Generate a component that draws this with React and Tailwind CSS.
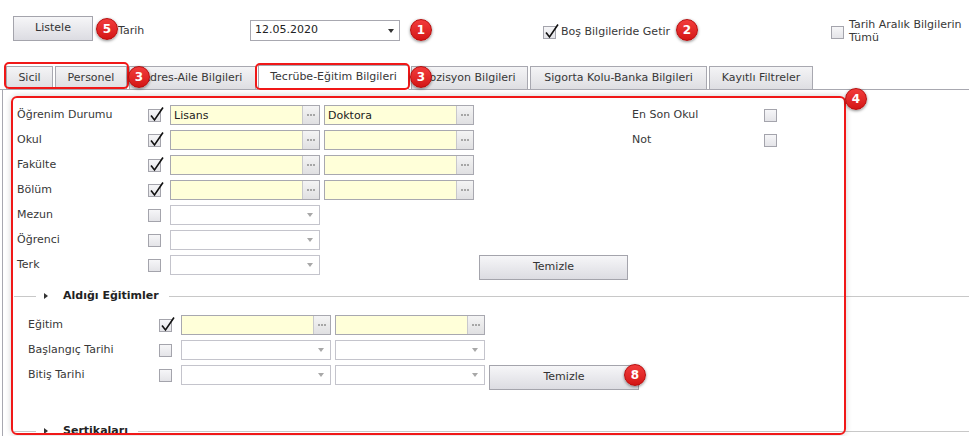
const FONT = "font-['DejaVu_Sans',Verdana,sans-serif]";

function Badge({ n, x, y }) {
  return (
    <div
      className="absolute w-[22px] h-[22px] rounded-full bg-gradient-to-b from-[#f23b3b] to-[#d41414] border border-[#b50d0d] shadow-[0_1px_3px_rgba(0,0,0,0.45)] flex items-center justify-center text-white text-[12px] font-bold leading-none"
      style={{ left: x - 11, top: y - 11 }}
    >
      {n}
    </div>
  );
}

function Check({ checked }) {
  return (
    <div className="relative w-[13px] h-[13px] border border-[#a4a4ac] bg-gradient-to-b from-[#f6f6f8] to-[#e4e4e8]">
      {checked && (
        <svg className="absolute left-[0px] top-[-4px]" width="16" height="17" viewBox="0 0 16 17">
          <path d="M2 9.5 L5.5 14 L14 1.5" fill="none" stroke="#111" strokeWidth="1.6" strokeLinejoin="miter" />
        </svg>
      )}
    </div>
  );
}

function Lookup({ value }) {
  return (
    <div className="flex w-[150px] h-[20px] border border-[#a8a8b0] bg-[#ffffd9]">
      <div className="flex-1 pl-[3px] leading-[19px] text-[#222]">{value}</div>
      <div className="w-[17px] h-full border-l border-[#c8c8cc] bg-gradient-to-b from-[#f4f4f4] to-[#e0e0e2] flex items-center justify-center gap-[1px]">
        <span className="w-[2px] h-[2px] bg-[#a6a6a6]" />
        <span className="w-[2px] h-[2px] bg-[#a6a6a6]" />
        <span className="w-[2px] h-[2px] bg-[#a6a6a6]" />
      </div>
    </div>
  );
}

function Combo() {
  return (
    <div className="flex items-center justify-end w-[150px] h-[20px] border border-[#c4c4cc] bg-white pr-[6px]">
      <span className="w-0 h-0 border-x-[3.5px] border-x-transparent border-t-[4px] border-t-[#a8a8a8]" />
    </div>
  );
}

function Button({ children, className }) {
  return (
    <div className={`h-[25px] border border-[#a4a4ac] bg-gradient-to-b from-[#f6f6f8] to-[#dcdce2] flex items-center justify-center text-[#333] ${className}`}>
      {children}
    </div>
  );
}

function Divider({ title }) {
  return (
    <div className="flex items-center h-[14px]">
      <div className="ml-[11px] w-[22px] h-px bg-[#c8c8c8]" />
      <span className="ml-[8px] w-0 h-0 border-y-[3.5px] border-y-transparent border-l-[4px] border-l-[#333]" />
      <div className="ml-[15px] font-bold text-[#222] whitespace-nowrap">{title}</div>
      <div className="ml-[10px] flex-1 h-px bg-[#c8c8c8]" />
    </div>
  );
}

const rows = [
  { label: 'Öğrenim Durumu', checked: true, kind: 'lookup', a: 'Lisans', b: 'Doktora', right: 'En Son Okul' },
  { label: 'Okul', checked: true, kind: 'lookup', right: 'Not' },
  { label: 'Fakülte', checked: true, kind: 'lookup' },
  { label: 'Bölüm', checked: true, kind: 'lookup' },
  { label: 'Mezun', checked: false, kind: 'combo' },
  { label: 'Öğrenci', checked: false, kind: 'combo' },
  { label: 'Terk', checked: false, kind: 'combo', button: true },
];

const tabs = [
  { name: 'Sicil', w: 'w-[47px]' },
  { name: 'Personel', w: 'w-[72px]' },
  { name: 'Adres-Aile Bilgileri', w: 'w-[127px]' },
  { name: 'Tecrübe-Eğitim Bilgileri', w: 'w-[151px]', active: true },
  { name: 'Pozisyon Bilgileri', w: 'w-[117px]' },
  { name: 'Sigorta Kolu-Banka Bilgileri', w: 'w-[177px]' },
  { name: 'Kayıtlı Filtreler', w: 'w-[104px]' },
];

export default function App() {
  return (
    <div className={`relative w-[969px] h-[436px] overflow-hidden bg-white text-[11px] text-[#383838] ${FONT}`}>
      {/* top bar */}
      <div className="flex items-start h-[65px]">
        <Button className="ml-[13px] mt-[16px] w-[80px]">Listele</Button>
        <div className="ml-[25px] mt-[23px] w-[132px]">Tarih</div>
        <div className="mt-[20px] w-[150px] h-[21px] border border-[#a8a8b0] flex items-center justify-between pl-[4px] pr-[5px] text-[#222]">
          <span>12.05.2020</span>
          <span className="w-0 h-0 border-x-[3.5px] border-x-transparent border-t-[4px] border-t-[#333]" />
        </div>
        <div className="ml-[143px] mt-[24px] w-[288px] flex items-center gap-[5px]">
          <Check checked />
          <span>Boş Bilgileride Getir</span>
        </div>
        <div className="mt-[18px] flex items-start gap-[5px]">
          <div className="mt-[8px]"><Check /></div>
          <div className="leading-[13px]">Tarih Aralık Bilgilerin<br />Tümü</div>
        </div>
      </div>

      {/* tabs */}
      <div className="flex items-end h-[25px] pl-[6px] gap-[2px] border-b border-[#a8a8b0]">
        {tabs.map((t) => (
          <div
            key={t.name}
            className={`${t.w} flex items-center justify-center border border-[#a8a8b0] whitespace-nowrap ${
              t.active ? 'h-[25px] -mb-px border-b-white bg-white' : 'h-[24px] -mb-px bg-gradient-to-b from-[#f4f4f6] to-[#dedee2]'
            }`}
          >
            {t.name}
          </div>
        ))}
      </div>

      {/* panel */}
      <div className="ml-[2px] h-[400px] border-l border-[#a8a8b0] pt-[15px]">
        <div className="flex flex-col gap-[5px]">
          {rows.map((r) => (
            <div key={r.label} className="flex items-center h-[20px] pl-[14px]">
              <div className="w-[131px] pt-px">{r.label}</div>
              <div className="w-[22px]"><Check checked={r.checked} /></div>
              {r.kind === 'lookup' ? (
                <>
                  <Lookup value={r.a} />
                  <div className="ml-[4px]"><Lookup value={r.b} /></div>
                </>
              ) : (
                <Combo />
              )}
              {r.right && (
                <>
                  <div className="ml-[158px] w-[132px] pt-px">{r.right}</div>
                  <Check />
                </>
              )}
              {r.button && (
                <div className="self-start ml-[159px]">
                  <Button className="w-[149px]">Temizle</Button>
                </div>
              )}
            </div>
          ))}
        </div>

        <div className="mt-[14px]">
          <Divider title="Aldığı Eğitimler" />
        </div>

        <div className="mt-[12px] flex flex-col gap-[5px]">
          <div className="flex items-center h-[20px] pl-[25px]">
            <div className="w-[131px] pt-px">Eğitim</div>
            <div className="w-[22px]"><Check checked /></div>
            <Lookup />
            <div className="ml-[4px]"><Lookup /></div>
          </div>
          <div className="flex items-center h-[20px] pl-[25px]">
            <div className="w-[131px] pt-px">Başlangıç Tarihi</div>
            <div className="w-[22px]"><Check /></div>
            <Combo />
            <div className="ml-[4px]"><Combo /></div>
          </div>
          <div className="flex items-center h-[20px] pl-[25px]">
            <div className="w-[131px] pt-px">Bitiş Tarihi</div>
            <div className="w-[22px]"><Check /></div>
            <Combo />
            <div className="ml-[4px]"><Combo /></div>
            <div className="self-start ml-[4px]">
              <Button className="w-[150px]">Temizle</Button>
            </div>
          </div>
        </div>

        <div className="mt-[39px]">
          <Divider title="Sertikaları" />
        </div>
      </div>

      {/* annotation overlays */}
      <div className="absolute left-[4px] top-[62px] w-[125px] h-[27px] border-2 border-[#f01818] rounded-[5px]" />
      <div className="absolute left-[255px] top-[63px] w-[155px] h-[27px] border-2 border-[#f01818] rounded-[5px]" />
      <div className="absolute left-[11px] top-[96px] w-[835px] h-[339px] border-2 border-[#f01818] rounded-[6px] shadow-[0_0_6px_rgba(0,0,0,0.18)]" />

      <Badge n="5" x={107} y={29} />
      <Badge n="1" x={421} y={30} />
      <Badge n="2" x={687} y={30} />
      <Badge n="3" x={139} y={77} />
      <Badge n="3" x={421} y={77} />
      <Badge n="4" x={856} y={99} />
      <Badge n="8" x={635} y={375} />
    </div>
  );
}
